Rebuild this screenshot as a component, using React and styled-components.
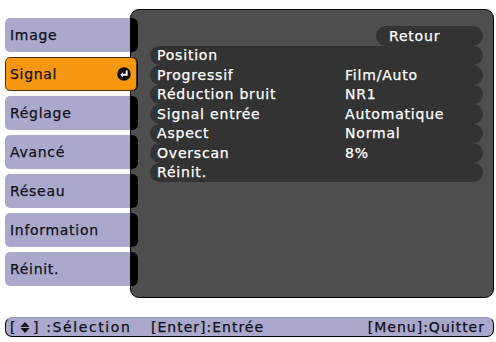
import React from "react";
import styled, { createGlobalStyle } from "styled-components";

const GlobalStyle = createGlobalStyle`
  html, body {
    margin: 0;
    padding: 0;
    background: #ffffff;
  }
  body {
    font-family: "DejaVu Sans", Verdana, sans-serif;
    font-size: 14px;
    -webkit-text-stroke: 0.25px currentColor;
  }
`;

const tabs = ["Image", "Signal", "Réglage", "Avancé", "Réseau", "Information", "Réinit."];
const active = "Signal";

const rows = [
  ["Position", ""],
  ["Progressif", "Film/Auto"],
  ["Réduction bruit", "NR1"],
  ["Signal entrée", "Automatique"],
  ["Aspect", "Normal"],
  ["Overscan", "8%"],
  ["Réinit.", ""],
];

const Screen = styled.div`
  width: 496px;
  height: 342px;
  display: flex;
  flex-direction: column;
  box-sizing: border-box;
  padding-top: 9px;
  overflow: hidden;
`;

const Main = styled.div`
  display: flex;
  align-items: flex-start;
`;

const Sidebar = styled.div`
  width: 125px;
  margin-left: 5px;
  padding-top: 9px;
  display: flex;
  flex-direction: column;
  gap: 5px;
`;

const Tab = styled.div`
  height: 34px;
  display: flex;
  align-items: center;
  justify-content: space-between;
  box-sizing: border-box;
  padding: 0 5px 1px 5px;
  border-radius: 5px 0 0 5px;
  background: ${(p) => (p.$active ? "#f7970f" : "#aaa8cb")};
  color: #101018;
  letter-spacing: 0.7px;
  position: relative;
  z-index: ${(p) => (p.$active ? 2 : 0)};
  margin-right: ${(p) => (p.$active ? "-7px" : "0")};
  border: ${(p) => (p.$active ? "1px solid #4a3000" : "none")};
  ${(p) => p.$active && "border-radius: 5px; padding-left: 4px;"}
`;

const EnterIcon = () => (
  <svg width="14" height="14" viewBox="0 0 13 13">
    <circle cx="6.5" cy="6.5" r="6.3" fill="#111" />
    <path d="M9 3.2 V7.2 H5" stroke="#fff" strokeWidth="1.8" fill="none" />
    <path d="M3 7.2 L5.6 4.8 V9.6 Z" fill="#fff" />
  </svg>
);

const Panel = styled.div`
  width: 364px;
  height: 289px;
  box-sizing: border-box;
  border: 1px solid #000;
  border-radius: 9px;
  background: #4e4e4e;
  display: flex;
  overflow: hidden;
`;

const Edge = styled.div`
  width: 7px;
  padding-top: 8px;
  display: flex;
  flex-direction: column;
  gap: 5px;
`;

const EdgeCap = styled.div`
  height: 34px;
  background: #000;
  border-radius: 0 6px 6px 0;
`;

const Content = styled.div`
  flex: 1;
  padding: 16px 10px 0 12px;
  display: flex;
  flex-direction: column;
`;

const Pill = styled.div`
  height: 19.5px;
  background: #333333;
  border-radius: 10px;
  color: #ffffff;
  display: flex;
  align-items: center;
  letter-spacing: 0.8px;
`;

const Back = styled(Pill)`
  align-self: flex-end;
  width: 107px;
  padding-left: 13px;
  box-sizing: border-box;
`;

const Row = styled(Pill)`
  display: grid;
  grid-template-columns: 188px 1fr;
  padding-left: 7px;
`;

const Footer = styled.div`
  margin: 19px 2px 0 5px;
  height: 20px;
  box-sizing: border-box;
  background: #aaa8cb;
  border: 1px solid #000;
  border-top-color: #9c9abd;
  border-radius: 7px;
  display: flex;
  align-items: center;
  padding: 0 8px 0 4px;
  color: #101018;
  letter-spacing: 1px;
`;

const Hint = styled.span`
  display: inline-flex;
  align-items: center;
  width: ${(p) => (p.$width ? `${p.$width}px` : "auto")};
  letter-spacing: ${(p) => p.$spacing || 1}px;
`;

const Spacer = styled.div`
  flex: 1;
`;

const UpDown = styled.svg`
  margin: 0 3px;
`;

export default function App() {
  return (
    <>
      <GlobalStyle />
      <Screen>
        <Main>
          <Sidebar>
            {tabs.map((t) => (
              <Tab key={t} $active={t === active}>
                <span>{t}</span>
                {t === active && <EnterIcon />}
              </Tab>
            ))}
          </Sidebar>
          <Panel>
            <Edge>
              {tabs.map((t) => (
                <EdgeCap key={t} />
              ))}
            </Edge>
            <Content>
              <Back>Retour</Back>
              {rows.map(([label, value]) => (
                <Row key={label}>
                  <span>{label}</span>
                  <span>{value}</span>
                </Row>
              ))}
            </Content>
          </Panel>
        </Main>
        <Footer>
          <Hint $width={141} $spacing={1.6}>
            [
            <UpDown width="10" height="13" viewBox="0 0 11 13">
              <path d="M5.5 0.5 L10.5 6 H0.5 Z" fill="#101018" />
              <path d="M0.5 7 H10.5 L5.5 12.5 Z" fill="#101018" />
            </UpDown>
            ] :Sélection
          </Hint>
          <Hint>[Enter]:Entrée</Hint>
          <Spacer />
          <Hint>[Menu]:Quitter</Hint>
        </Footer>
      </Screen>
    </>
  );
}
